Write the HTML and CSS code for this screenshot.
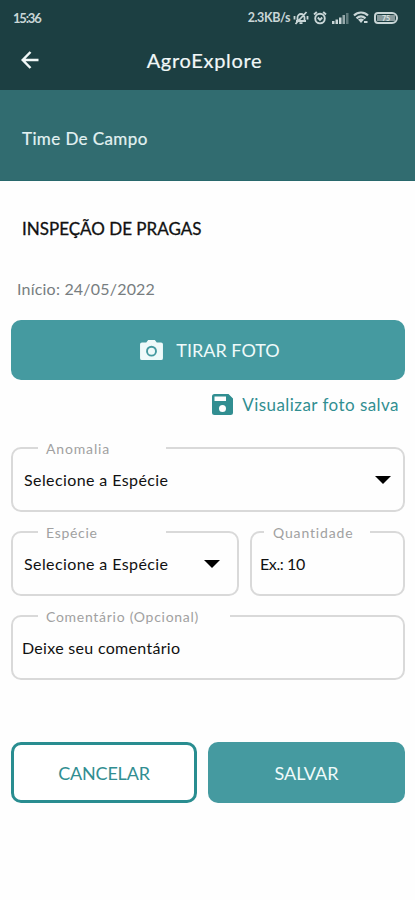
FILE: index.html
```html
<!DOCTYPE html>
<html lang="pt-BR">
<head>
<meta charset="utf-8">
<title>AgroExplore</title>
<link rel="stylesheet" href="styles.css">
</head>
<body>
<header class="top">
  <div class="status">
    <span class="clock">15:36</span>
    <div class="tray">
      <span class="speed">2.3KB/s</span>
      <svg class="bell" width="16" height="14" viewBox="0 0 16 14" fill="none" stroke="currentColor" stroke-width="1.8"><path d="M3 10h10M4.500 10V6.500a3.500 3.500 0 0 1 7 0V10M6.500 12.200h3M2.500 13 13.500 1M1.500 5v3.500M14.500 5v3.500"/></svg>
      <svg class="alarm" width="14" height="14" viewBox="0 0 14 14" fill="none" stroke="currentColor" stroke-width="1.9"><circle cx="7" cy="7.6" r="4.8"/><path d="M1 3.500 3.800 1M13 3.500 10.200 1M4.800 6.500 7 8.800 9.200 6.500"/></svg>
      <svg class="signal" width="17" height="12" viewBox="0 0 17 12" fill="currentColor"><path d="M0 9h2.500v3H0zM3.500 7.500H6V12H3.500zM7 5.500h2.500V12H7z"/><path opacity=".7" d="M10.500 3H13v9h-2.500z"/><path opacity=".4" d="M14 1h2.500v11H14z"/></svg>
      <svg class="wifi" width="16" height="13" viewBox="0 0 16 13" fill="none" stroke="currentColor" stroke-width="2.200"><path d="M1 4.500c4-4 10-4 14 0M3.500 7.300c3-2.600 6-2.600 9 0"/><path fill="currentColor" stroke="none" d="M5 8.600q3-2 6 0L8 12zM11 10h3.500v2H11z"/></svg>
      <span class="battery"><span class="charge">75</span></span>
    </div>
  </div>
  <div class="appbar">
    <svg class="back" width="18" height="18" viewBox="0 0 18 18" fill="none" stroke="currentColor" stroke-width="2.500"><path d="M17.500 9H2M9.500 1 1.700 9l7.800 8"/></svg>
    <h1>AgroExplore</h1>
  </div>
</header>
<div class="team"><span>Time De Campo</span></div>
<main>
  <h2>INSPEÇÃO DE PRAGAS</h2>
  <p class="start">Início: 24/05/2022</p>
  <button class="btn photo">
    <svg width="23" height="21" viewBox="0 0 24 22"><path fill="currentColor" fill-rule="evenodd" d="M8.500 0h7l2 2.500H22a2 2 0 0 1 2 2V19a2 2 0 0 1-2 2H2a2 2 0 0 1-2-2V4.500a2 2 0 0 1 2-2h4.500zM12 6a5.700 5.700 0 1 0 0 11.400A5.700 5.700 0 0 0 12 6zM12 8a3.700 3.700 0 1 1 0 7.400A3.700 3.700 0 0 1 12 8z"/></svg>
    <span>TIRAR FOTO</span>
  </button>
  <a class="view">
    <svg width="21" height="21" viewBox="0 0 21 21"><path fill="currentColor" fill-rule="evenodd" d="M2.500 0h14L21 4.500v14a2.500 2.500 0 0 1-2.500 2.500h-16A2.500 2.500 0 0 1 0 18.500v-16A2.500 2.500 0 0 1 2.500 0zM2.500 2.500V7H14V2.500zM10.500 11a3.500 3.500 0 1 0 0 7 3.500 3.500 0 0 0 0-7z"/></svg>
    <span>Visualizar foto salva</span>
  </a>
  <div class="fields">
    <fieldset class="anomaly">
      <legend>Anomalia</legend>
      <div class="value"><span>Selecione a Espécie</span><i class="caret"></i></div>
    </fieldset>
    <fieldset class="species">
      <legend>Espécie</legend>
      <div class="value"><span>Selecione a Espécie</span><i class="caret"></i></div>
    </fieldset>
    <fieldset class="amount">
      <legend>Quantidade</legend>
      <div class="value"><span>Ex.: 10</span></div>
    </fieldset>
    <fieldset class="comment">
      <legend>Comentário (Opcional)</legend>
      <div class="value"><span>Deixe seu comentário</span></div>
    </fieldset>
  </div>
  <div class="actions">
    <button class="btn outline"><span>CANCELAR</span></button>
    <button class="btn save"><span>SALVAR</span></button>
  </div>
</main>
</body>
</html>
```
FILE: styles.css
```css
* { box-sizing: border-box; }
body { margin: 0; background: #fefefe; font-family: Lato, "Open Sans", sans-serif; color: #111; }
h1, h2, p { margin: 0; font-weight: 400; }
svg { flex: none; display: block; }
span { white-space: nowrap; }
.top { height: 90px; background: #1c3f42; color: #f1f8f8; }
.status { height: 35px; padding: 0 17px 0 13px; display: flex; justify-content: space-between; align-items: center; color: #c9d6d7; font-size: 13px; font-weight: 700; }
.clock { letter-spacing: -1.2px; }
.tray { display: flex; align-items: center; }
.speed { font-size: 12.5px; letter-spacing: -.4px; }
.bell { margin-left: 3px; }
.alarm { margin-left: 4px; }
.signal { margin-left: 5px; }
.wifi { margin-left: 4px; }
.battery { margin-left: 5px; width: 24px; height: 12px; border: 2px solid; border-radius: 4px 6px 6px 4px; display: flex; padding: 1px; }
.charge { flex: 1; background: #87999b; color: #dce5e5; font-size: 7px; line-height: 6px; text-align: center; }
.appbar { height: 49px; display: grid; grid-template-columns: 1fr auto 1fr; align-items: center; padding: 0 27px 0 21px; }
h1 { font-size: 20px; letter-spacing: .7px; -webkit-text-stroke: .2px; }
.team { height: 91px; background: #316c70; border-bottom: 1px solid #28686c; color: #e3f2f2; padding: 6px 22px 0; display: flex; align-items: center; font-size: 17px; letter-spacing: .4px; -webkit-text-stroke: .2px; }
main { padding: 0 10px 0 11px; display: flex; flex-direction: column; }
h2 { margin: 36px 0 0 11px; font-size: 17px; line-height: 24px; letter-spacing: 0; -webkit-text-stroke: .3px; }
.start { margin: 36px 0 0 6px; font-size: 16px; line-height: 24px; color: #777d80; letter-spacing: .2px; }
.btn { height: 60px; border: 0; border-radius: 10px; background: #459aa0; color: #effafa; font: 18px Lato, sans-serif; display: flex; align-items: center; justify-content: center; padding: 0; }
.photo { margin-top: 19px; gap: 13px; padding-left: 4px; }
.view { margin: 13px 6px 0 0; align-self: flex-end; display: flex; align-items: center; gap: 9px; height: 22px; color: #318e91; font-size: 17px; letter-spacing: .45px; }
.fields { margin-top: 25px; display: grid; grid-template-columns: 228px 1fr; gap: 12px 11px; }
fieldset { margin: 0; min-width: 0; height: 72px; border: 2px solid #d9d9d9; border-radius: 10px; padding: 0 11px; }
.anomaly, .comment { grid-column: 1 / 3; }
legend { height: 16px; line-height: 18px; margin-left: 14px; width: 128px; padding: 0 0 0 8px; color: #a1a1a1; font-size: 14px; letter-spacing: .85px; white-space: nowrap; }
.species legend { letter-spacing: .7px; }
.amount legend { margin-left: 4px; width: 106px; padding-left: 9px; }
.value { height: 47px; display: flex; align-items: center; justify-content: space-between; font-size: 16px; letter-spacing: .4px; }
.amount { padding-left: 8px; }
.amount .value { letter-spacing: -.4px; }
.comment { padding-left: 9px; }
.comment legend { margin-left: 16px; width: 192px; letter-spacing: .72px; }
.comment .value { letter-spacing: .3px; }
.caret { border: 8px solid transparent; border-top-color: #000; border-bottom: 0; margin-right: 1px; }
.species .caret { margin-right: 6px; }
.actions { margin-top: 62px; display: grid; grid-template-columns: 186px 1fr; gap: 11px; }
.actions .btn { height: 61px; padding-top: 0; }
.actions .outline { background: #fff; border: 3px solid #298d90; color: #318e91; letter-spacing: -.2px; }
```
